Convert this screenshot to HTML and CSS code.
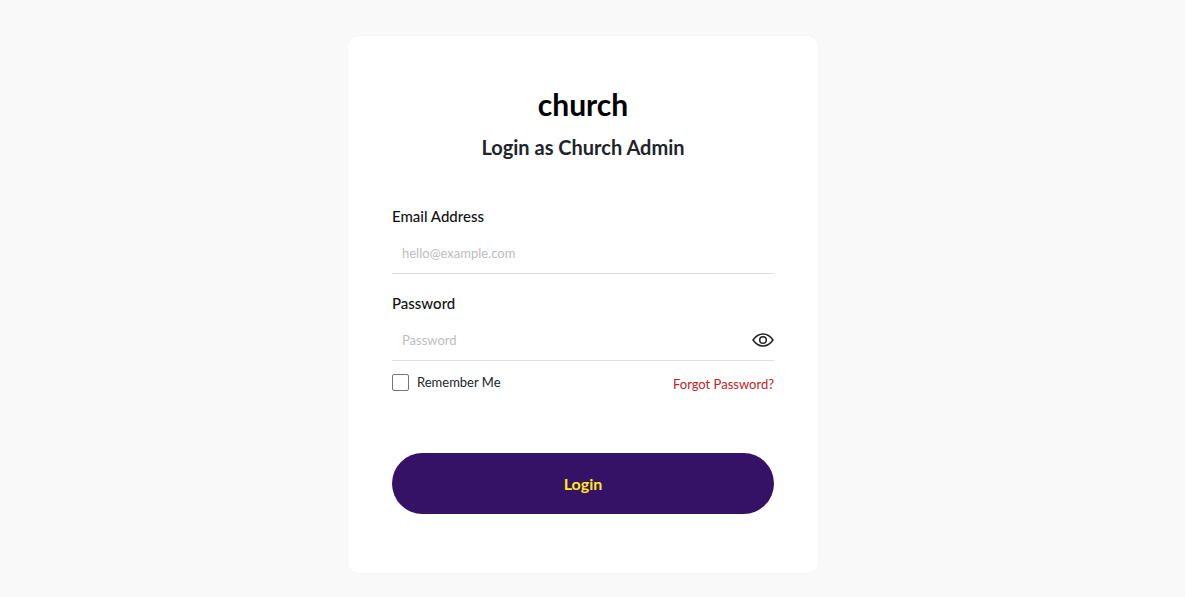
FILE: index.html
```html
<!DOCTYPE html>
<html lang="en">
<head>
<meta charset="utf-8">
<meta name="viewport" content="width=device-width, initial-scale=1">
<title>Church Admin Login</title>
<link rel="stylesheet" href="styles.css">
</head>
<body>
<main class="card">
  <header class="header">
    <div class="brand">church</div>
    <h1 class="title">Login as Church Admin</h1>
  </header>
  <form class="form">
    <div class="field">
      <label class="label" for="email">Email Address</label>
      <div class="control"><input class="input" id="email" type="email" placeholder="hello@example.com"></div>
    </div>
    <div class="field">
      <label class="label" for="password">Password</label>
      <div class="control">
        <input class="input" id="password" type="password" placeholder="Password">
        <button class="reveal" type="button" aria-label="Show password">
          <svg width="22" height="16" viewBox="0 0 22 16" fill="none" stroke="#222" stroke-width="1.5" stroke-linejoin="round"><path d="M1 8C3.800 4 7 2 11 2S18.200 4 21 8C18.200 12 15 14 11 14S3.800 12 1 8Z"/><circle cx="11" cy="8" r="3.300"/></svg>
        </button>
      </div>
    </div>
    <div class="options">
      <label class="remember" for="remember"><input class="checkbox" id="remember" type="checkbox">Remember Me</label>
      <a class="forgot" href="#">Forgot Password?</a>
    </div>
    <button class="submit" type="submit">Login</button>
  </form>
</main>
</body>
</html>
```
FILE: styles.css
```css
* {
  box-sizing: border-box;
}

body {
  margin: 0;
  padding: 36px 19px 24px 0;
  background: #f9f9f9;
  color: #212529;
  font-family: Lato, "Open Sans", sans-serif;
}

.card {
  width: 100%;
  max-width: 470px;
  margin: 0 auto;
  padding: 49px 44px 59px;
  border-radius: 10px;
  background: #fff;
  box-shadow: 0 0 2px rgba(0, 0, 0, 0.06);
}

.header {
  text-align: center;
}

.brand {
  color: #000;
  font-size: 30px;
  font-weight: 700;
  line-height: 38px;
}

.title {
  margin: 12px 0 0;
  font-size: 20px;
  font-weight: 700;
  line-height: 24px;
}

.form {
  margin-top: 47px;
}

.field {
  margin-bottom: 19px;
}

.label {
  display: block;
  color: #111;
  font-size: 15px;
  font-weight: 500;
  line-height: 21px;
}

.control {
  display: flex;
  align-items: center;
  height: 47px;
  padding-top: 6px;
  border-bottom: 1px solid #dedede;
}

.input {
  flex: 1;
  min-width: 0;
  height: 38px;
  padding: 0 10px;
  border: 0;
  outline: 0;
  background: transparent;
  color: #212529;
  font: inherit;
  font-size: 13px;
}

.input::placeholder {
  color: #bdbdbd;
  opacity: 1;
}

.reveal {
  display: flex;
  padding: 0;
  border: 0;
  background: none;
}

.options {
  display: flex;
  justify-content: space-between;
  align-items: flex-start;
  margin-top: -8px;
  font-size: 13px;
  line-height: 20px;
}

.remember {
  display: flex;
  align-items: center;
  gap: 8px;
}

.checkbox {
  appearance: none;
  width: 17px;
  height: 17px;
  margin: 0;
  border: 1px solid #767676;
  border-radius: 2px;
  background: #fff;
}

.checkbox:checked {
  background: #351265;
}

.forgot {
  margin-top: 2px;
  color: #c5221f;
  text-decoration: none;
}

.submit {
  width: 100%;
  height: 61px;
  margin-top: 59px;
  border: 0;
  border-radius: 31px;
  background: #351265;
  color: #ffe815;
  font: inherit;
  font-size: 16px;
  font-weight: 700;
}
```
